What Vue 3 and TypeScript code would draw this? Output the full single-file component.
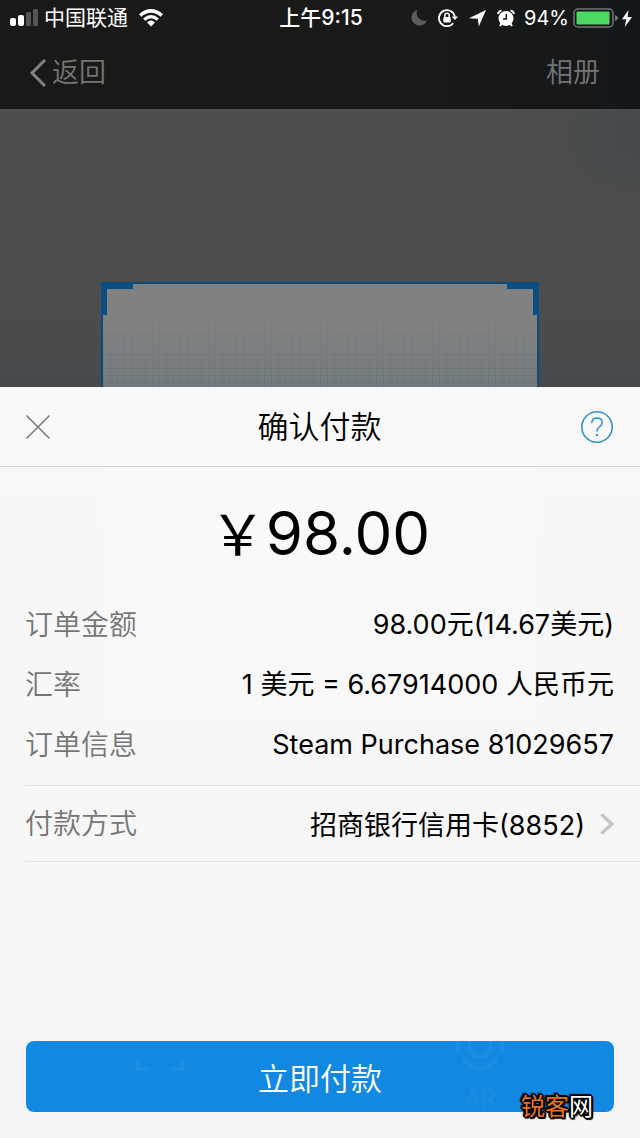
<script setup lang="ts">
interface OrderRow {
  label: string
  value: string
}

const rows: OrderRow[] = [
  { label: '订单金额', value: '98.00元(14.67美元)' },
  { label: '汇率', value: '1 美元 = 6.67914000 人民币元' },
  { label: '订单信息', value: 'Steam Purchase 81029657' },
]
</script>

<template>
  <div class="page">
    <header class="top">
      <div class="status">
        <div class="status-side">
          <svg class="signal" width="30" height="18" viewBox="0 0 30 18" aria-hidden="true">
            <rect x="0" y="9" width="6" height="8" rx="2" fill="#fff" />
            <rect x="8" y="6" width="6" height="11" rx="2" fill="#fff" />
            <rect x="16" y="3" width="5" height="14" rx="1.5" fill="#555" />
            <rect x="23" y="0" width="5" height="17" rx="1.5" fill="#555" />
          </svg>
          <span class="carrier">中国联通</span>
          <svg class="wifi" width="24" height="18" viewBox="0 0 24 18" aria-hidden="true">
            <path d="M1.2 6.5Q12-2.7 22.8 6.5" fill="none" stroke="#fff" stroke-width="3.5" />
            <path d="M5.2 10.6Q12 4.6 18.8 10.6" fill="none" stroke="#fff" stroke-width="3.2" />
            <path d="M8 13.4Q12 9.8 16 13.4L12 17.4Z" fill="#fff" />
          </svg>
        </div>
        <span class="time">上午9:15</span>
        <div class="status-side status-right">
          <svg width="17" height="18" viewBox="0 0 17 18" aria-hidden="true">
            <path d="M6.3 1A8 8 0 1 0 16 11.6A8 8 0 0 1 6.3 1Z" fill="#5c5c5c" />
          </svg>
          <svg class="lock" width="20" height="18" viewBox="0 0 20 18" aria-hidden="true">
            <path d="M15.2 14.2A8 8 0 1 1 16.8 7.6" fill="none" stroke="#fff" stroke-width="1.8" />
            <path d="M13.8 7.4H20L16.9 11Z" fill="#fff" />
            <rect x="5.3" y="8" width="7.4" height="5.6" rx="1" fill="#fff" />
            <path d="M6.8 8V6.4a2.2 2.2 0 0 1 4.4 0V8" fill="none" stroke="#fff" stroke-width="1.5" />
          </svg>
          <svg class="arrow" width="17" height="18" viewBox="0 0 17 18" aria-hidden="true">
            <path d="M17 1L9.8 17.5L8.8 9.8L0 9.2Z" fill="#fff" />
          </svg>
          <svg class="alarm" width="18" height="18" viewBox="0 0 18 18" aria-hidden="true">
            <circle cx="9" cy="9.5" r="7.5" fill="#fff" />
            <path d="M1 5Q1.5 2.2 4.5 1.4M17 5Q16.5 2.2 13.5 1.4" fill="none" stroke="#fff" stroke-width="2" />
            <path d="M4.6 14.5L3 17M13.4 14.5L15 17" stroke="#fff" stroke-width="2" />
            <path d="M9.3 5V10H6" fill="none" stroke="#191918" stroke-width="1.5" />
          </svg>
          <span class="percent">94%</span>
          <svg class="battery" width="45" height="20" viewBox="0 0 45 20" aria-hidden="true">
            <rect x="1" y="1" width="39" height="18" rx="4" fill="none" stroke="#747574" stroke-width="1.5" />
            <rect x="3.5" y="3.5" width="33" height="13" rx="1" fill="#4bd863" />
            <path d="M42 7Q45 8 45 10T42 13Z" fill="#747574" />
          </svg>
          <svg class="bolt" width="10" height="17" viewBox="0 0 10 17" aria-hidden="true">
            <path d="M6.5 0L0 9.2H4.2L2.8 17L10 7H5.6Z" fill="#fff" />
          </svg>
        </div>
      </div>
      <nav class="nav">
        <button type="button" class="nav-btn">
          <svg width="18" height="30" viewBox="0 0 18 30" aria-hidden="true">
            <path d="M16 2L3 15L16 28" fill="none" stroke="#828282" stroke-width="3" />
          </svg>
          <span>返回</span>
        </button>
        <button type="button" class="nav-btn">相册</button>
      </nav>
    </header>

    <section class="scanner" aria-label="扫码">
      <div class="frame">
        <i class="corner left"></i>
        <i class="corner right"></i>
      </div>
    </section>

    <main class="sheet">
      <div class="sheet-head">
        <button type="button" class="icon-btn" aria-label="关闭">
          <svg width="26" height="26" viewBox="0 0 26 26" aria-hidden="true">
            <path d="M1.5 1.5L24.5 24.5M24.5 1.5L1.5 24.5" stroke="#7c7c7c" stroke-width="1.6" />
          </svg>
        </button>
        <h1>确认付款</h1>
        <button type="button" class="icon-btn" aria-label="帮助">
          <svg width="34" height="34" viewBox="0 0 34 34" aria-hidden="true">
            <circle cx="17" cy="17" r="15.2" fill="none" stroke="#3191cf" stroke-width="1.6" />
            <path d="M11.8 13.2C11.8 9.8 14 8 17 8C20.1 8 22.2 9.8 22.2 12.5C22.2 14.8 20.6 15.9 19.2 17C17.7 18.2 17 19 17 21.4" fill="none" stroke="#3191cf" stroke-width="1.5" />
            <circle cx="17" cy="25" r="1.2" fill="#3191cf" />
          </svg>
        </button>
      </div>

      <p class="amount"><span class="currency">￥</span>98.00</p>

      <dl class="rows">
        <div v-for="row in rows" :key="row.label" class="row">
          <dt>{{ row.label }}</dt>
          <dd>{{ row.value }}</dd>
        </div>
      </dl>

      <button type="button" class="method">
        <span class="method-label">付款方式</span>
        <span>招商银行信用卡(8852)</span>
        <svg width="14" height="22" viewBox="0 0 14 22" aria-hidden="true">
          <path d="M1.5 1.5L12 11L1.5 20.5" fill="none" stroke="#c4c4c6" stroke-width="3.4" />
        </svg>
      </button>

      <button type="button" class="pay">立即付款</button>

      <div class="ghost" aria-hidden="true">
        <div class="ghost-tab">
          <svg width="50" height="50" viewBox="0 0 50 50">
            <path d="M3 14V3H14M36 3H47V14M47 36V47H36M14 47H3V36" fill="none" stroke="#fff" stroke-width="4" />
          </svg>
        </div>
        <div class="ghost-tab">
          <svg width="50" height="50" viewBox="0 0 50 50">
            <path d="M3 31V14L25 2L47 14V31M7 38L25 48L43 38" fill="none" stroke="#fff" stroke-width="4" />
            <circle cx="25" cy="24" r="11" fill="none" stroke="#fff" stroke-width="4" />
          </svg>
          <span>AR</span>
        </div>
      </div>
    </main>

    <div class="watermark"><span>锐客</span>网</div>
  </div>
</template>

<style>
body {
  margin: 0;
  background: #4d4d4c;
}
</style>

<style scoped>
.page {
  position: relative;
  display: flex;
  flex-direction: column;
  min-height: 100vh;
  overflow: hidden;
  background: #4d4d4c;
  color: #000;
  font-family: Inter, "Noto Sans CJK SC", sans-serif;
  font-size: 27px;
  font-weight: 400;
}

button {
  margin: 0;
  padding: 0;
  border: 0;
  background: none;
  color: inherit;
  font: inherit;
}

svg {
  display: block;
  flex: none;
}

.top {
  background: linear-gradient(90deg, #191918 70%, #14171a);
}

.status {
  display: grid;
  grid-template-columns: 1fr auto 1fr;
  align-items: center;
  height: 36px;
  padding: 0 8px 0 10px;
  color: #fff;
  font-size: 21px;
  line-height: 28px;
}

.status-side {
  display: flex;
  align-items: center;
  white-space: nowrap;
}

.status-right {
  justify-content: flex-end;
}

.carrier {
  margin-left: 4px;
}

.wifi {
  margin-left: 11px;
}

.time {
  font-weight: 500;
}

.lock {
  margin-left: 10px;
}

.arrow,
.alarm {
  margin-left: 11px;
}

.percent {
  margin-left: 9px;
  font-size: 20px;
}

.battery,
.bolt {
  margin-left: 4px;
}

.nav {
  display: flex;
  align-items: center;
  justify-content: space-between;
  height: 73px;
  padding: 0 40px 0 29px;
}

.nav-btn {
  display: flex;
  align-items: center;
  gap: 5px;
  color: #757575;
  font-weight: 350;
  line-height: 40px;
}

.scanner {
  height: 278px;
  background:
    radial-gradient(ellipse 90px 70px at 100% 10%, #434a4e, transparent),
    linear-gradient(#4d4d4c 65%, #474a4d);
}

.frame {
  position: relative;
  box-sizing: border-box;
  width: 68.5%;
  height: 438px;
  margin: 0 auto;
  top: 173px;
  border: 2px solid #0c4b7d;
  background:
    linear-gradient(#818181 20px, transparent 100px),
    repeating-linear-gradient(90deg, #626c7270 0 1px, transparent 1px 7px),
    repeating-linear-gradient(#626c7270 0 1px, transparent 1px 7px),
    linear-gradient(#818181, #747b7f 100px, #777c80);
}

.corner {
  position: absolute;
  top: -2px;
  width: 26px;
  height: 26px;
  border: 0 solid #0b4d80;
  border-top-width: 7px;
}

.corner.left {
  left: -2px;
  border-left-width: 6px;
}

.corner.right {
  right: -2px;
  border-right-width: 6px;
}

.sheet {
  position: relative;
  display: flex;
  flex: 1;
  flex-direction: column;
  background: linear-gradient(rgba(254, 254, 254, 0.97), rgba(251, 251, 251, 0.97));
}

.sheet-head {
  display: flex;
  align-items: center;
  justify-content: space-between;
  height: 79px;
  padding: 0 26px 0 25px;
  border-bottom: 1px solid #d3d3d4;
}

.icon-btn {
  display: flex;
  width: 34px;
}

.icon-btn:last-child {
  justify-content: flex-end;
}

h1 {
  margin: 0;
  font-size: 31px;
  font-weight: 350;
  line-height: 40px;
}

.amount {
  margin: 30px 0 24px;
  font-size: 60px;
  line-height: 72px;
  text-align: center;
}

.currency {
  font-size: 56px;
}

.rows {
  margin: 0;
  padding: 0 26px 0 25px;
}

.row {
  display: flex;
  align-items: center;
  justify-content: space-between;
  height: 60px;
}

dt,
.method-label {
  color: #757575;
  font-size: 28px;
  font-weight: 350;
  line-height: 40px;
}

dd {
  margin: 0;
  line-height: 40px;
}

.method {
  display: flex;
  align-items: center;
  height: 77px;
  margin: 10px 0 0 25px;
  padding-right: 26px;
  border-top: 1px solid #e1e1e2;
  border-bottom: 1px solid #e1e1e2;
}

.method-label {
  margin-right: auto;
}

.method svg {
  margin-left: 15px;
}

.pay {
  height: 71px;
  margin: auto 26px 26px;
  border-radius: 8px;
  background: #1188e1;
  color: #fff;
  font-size: 31px;
  font-weight: 350;
}

.ghost {
  position: absolute;
  inset: auto 0 22px;
  display: grid;
  grid-template-columns: 1fr 1fr;
  height: 94px;
  opacity: 0.04;
  color: #fff;
  pointer-events: none;
}

.ghost-tab {
  display: flex;
  flex-direction: column;
  align-items: center;
  gap: 12px;
  font-size: 24px;
  line-height: 30px;
}

.watermark {
  position: absolute;
  right: 47px;
  bottom: 13px;
  color: #fff;
  font-size: 24px;
  line-height: 36px;
  text-shadow:
    2px 0 #000, -2px 0 #000, 0 2px #000, 0 -2px #000,
    1px 1px #000, -1px 1px #000, 1px -1px #000, -1px -1px #000,
    2px 2px 1px #000, -2px -2px 1px #000;
}

.watermark span {
  color: #e8731c;
}
</style>
